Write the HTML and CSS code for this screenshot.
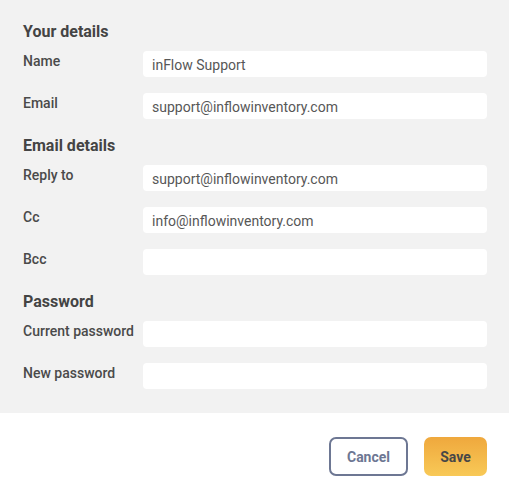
FILE: index.html
```html
<!DOCTYPE html>
<html>
<head>
<meta charset="utf-8">
<link rel="stylesheet" href="styles.css">
</head>
<body>
<div class="panel">
  <section class="section">
    <h2 class="heading">Your details</h2>
    <div class="rows">
      <div class="row"><label class="label">Name</label><input class="field" type="text" value="inFlow Support"></div>
      <div class="row"><label class="label">Email</label><input class="field" type="text" value="support@inflowinventory.com"></div>
    </div>
  </section>
  <section class="section">
    <h2 class="heading">Email details</h2>
    <div class="rows">
      <div class="row"><label class="label">Reply to</label><input class="field" type="text" value="support@inflowinventory.com"></div>
      <div class="row"><label class="label">Cc</label><input class="field" type="text" value="info@inflowinventory.com"></div>
      <div class="row"><label class="label">Bcc</label><input class="field" type="text" value=""></div>
    </div>
  </section>
  <section class="section">
    <h2 class="heading">Password</h2>
    <div class="rows">
      <div class="row"><label class="label">Current password</label><input class="field" type="password" value=""></div>
      <div class="row"><label class="label">New password</label><input class="field" type="password" value=""></div>
    </div>
  </section>
</div>
<div class="footer">
  <button class="btn btn-cancel" type="button">Cancel</button>
  <button class="btn btn-save" type="button">Save</button>
</div>
</body>
</html>
```
FILE: styles.css
```css
html, body {
  margin: 0;
  padding: 0;
  background: #ffffff;
  font-family: Roboto, "Liberation Sans", sans-serif;
}
.panel {
  background: #f2f2f2;
  padding: 22px 22px 24px 23px;
  display: flex;
  flex-direction: column;
  gap: 17px;
}
.section {
  display: flex;
  flex-direction: column;
  gap: 9px;
}
.heading {
  margin: 0;
  font-size: 16px;
  line-height: 20px;
  font-weight: 700;
  color: #444444;
}
.rows {
  display: flex;
  flex-direction: column;
  gap: 16px;
}
.row {
  display: flex;
  align-items: flex-start;
}
.label {
  width: 120px;
  flex: none;
  font-size: 14px;
  line-height: 21px;
  font-weight: 500;
  color: #4a4a4a;
  white-space: nowrap;
}
.field {
  flex: 1;
  min-width: 0;
  height: 26px;
  box-sizing: border-box;
  margin: 0;
  border: none;
  outline: none;
  border-radius: 4px;
  background: #ffffff;
  padding: 2px 9px 0 9px;
  font-family: Roboto, "Liberation Sans", sans-serif;
  font-size: 14px;
  color: #575757;
}
.footer {
  display: flex;
  justify-content: flex-end;
  gap: 16px;
  padding: 24px 22px 0 0;
}
.btn {
  height: 39px;
  box-sizing: border-box;
  border-radius: 7px;
  font-family: Roboto, "Liberation Sans", sans-serif;
  font-size: 14px;
  font-weight: 700;
  padding: 0;
  cursor: pointer;
}
.btn-cancel {
  width: 79px;
  background: #ffffff;
  border: 2px solid #6d7793;
  color: #6d7793;
}
.btn-save {
  width: 63px;
  border: none;
  background: linear-gradient(to bottom, #efa83d, #f8c957);
  color: #474747;
}
```
